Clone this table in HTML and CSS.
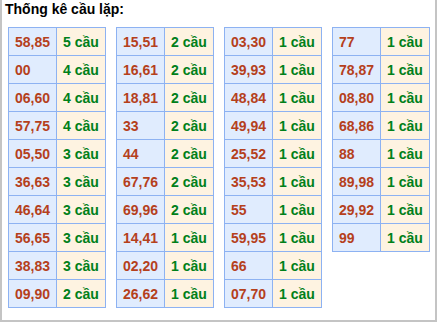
FILE: index.html
```html
<!DOCTYPE html>
<html lang="vi">
<head>
<meta charset="utf-8">
<link rel="stylesheet" href="styles.css">
</head>
<body>
<div class="box">
  <div class="title">Thống kê cầu lặp:</div>
  <div class="tables">
    <table class="t">
      <tr><td class="n">58,85</td><td class="c">5 cầu</td></tr>
      <tr><td class="n">00</td><td class="c">4 cầu</td></tr>
      <tr><td class="n">06,60</td><td class="c">4 cầu</td></tr>
      <tr><td class="n">57,75</td><td class="c">4 cầu</td></tr>
      <tr><td class="n">05,50</td><td class="c">3 cầu</td></tr>
      <tr><td class="n">36,63</td><td class="c">3 cầu</td></tr>
      <tr><td class="n">46,64</td><td class="c">3 cầu</td></tr>
      <tr><td class="n">56,65</td><td class="c">3 cầu</td></tr>
      <tr><td class="n">38,83</td><td class="c">3 cầu</td></tr>
      <tr><td class="n">09,90</td><td class="c">2 cầu</td></tr>
    </table>
    <table class="t">
      <tr><td class="n">15,51</td><td class="c">2 cầu</td></tr>
      <tr><td class="n">16,61</td><td class="c">2 cầu</td></tr>
      <tr><td class="n">18,81</td><td class="c">2 cầu</td></tr>
      <tr><td class="n">33</td><td class="c">2 cầu</td></tr>
      <tr><td class="n">44</td><td class="c">2 cầu</td></tr>
      <tr><td class="n">67,76</td><td class="c">2 cầu</td></tr>
      <tr><td class="n">69,96</td><td class="c">2 cầu</td></tr>
      <tr><td class="n">14,41</td><td class="c">1 cầu</td></tr>
      <tr><td class="n">02,20</td><td class="c">1 cầu</td></tr>
      <tr><td class="n">26,62</td><td class="c">1 cầu</td></tr>
    </table>
    <table class="t">
      <tr><td class="n">03,30</td><td class="c">1 cầu</td></tr>
      <tr><td class="n">39,93</td><td class="c">1 cầu</td></tr>
      <tr><td class="n">48,84</td><td class="c">1 cầu</td></tr>
      <tr><td class="n">49,94</td><td class="c">1 cầu</td></tr>
      <tr><td class="n">25,52</td><td class="c">1 cầu</td></tr>
      <tr><td class="n">35,53</td><td class="c">1 cầu</td></tr>
      <tr><td class="n">55</td><td class="c">1 cầu</td></tr>
      <tr><td class="n">59,95</td><td class="c">1 cầu</td></tr>
      <tr><td class="n">66</td><td class="c">1 cầu</td></tr>
      <tr><td class="n">07,70</td><td class="c">1 cầu</td></tr>
    </table>
    <table class="t">
      <tr><td class="n">77</td><td class="c">1 cầu</td></tr>
      <tr><td class="n">78,87</td><td class="c">1 cầu</td></tr>
      <tr><td class="n">08,80</td><td class="c">1 cầu</td></tr>
      <tr><td class="n">68,86</td><td class="c">1 cầu</td></tr>
      <tr><td class="n">88</td><td class="c">1 cầu</td></tr>
      <tr><td class="n">89,98</td><td class="c">1 cầu</td></tr>
      <tr><td class="n">29,92</td><td class="c">1 cầu</td></tr>
      <tr><td class="n">99</td><td class="c">1 cầu</td></tr>
    </table>
  </div>
</div>
</body>
</html>
```
FILE: styles.css
```css
html, body {
  margin: 0;
  padding: 0;
  background: #ffffff;
}
body {
  font-family: "Liberation Sans", Arial, sans-serif;
}
.box {
  box-sizing: border-box;
  width: 437px;
  height: 322px;
  border: 2px solid #c4c4c4;
  border-top: none;
  padding: 0 0 0 6px;
}
.title {
  font-weight: bold;
  font-size: 14px;
  line-height: 16px;
  padding: 1px 0 0 0;
  margin-left: -3px;
  color: #000;
  height: 26px;
}
.tables {
  display: flex;
  align-items: flex-start;
  gap: 10px;
}
.t {
  border-collapse: collapse;
  width: 98px;
  table-layout: fixed;
}
.t td {
  border: 1px solid #8db2f2;
  height: 28px;
  padding: 0 0 0 6px;
  font-size: 14px;
  font-weight: bold;
  box-sizing: border-box;
  white-space: nowrap;
}
.t td.n {
  width: 48px;
  background: #e0ecfe;
  color: #b5401c;
}
.t td.c {
  background: #fef3e1;
  color: #00801a;
}
```
